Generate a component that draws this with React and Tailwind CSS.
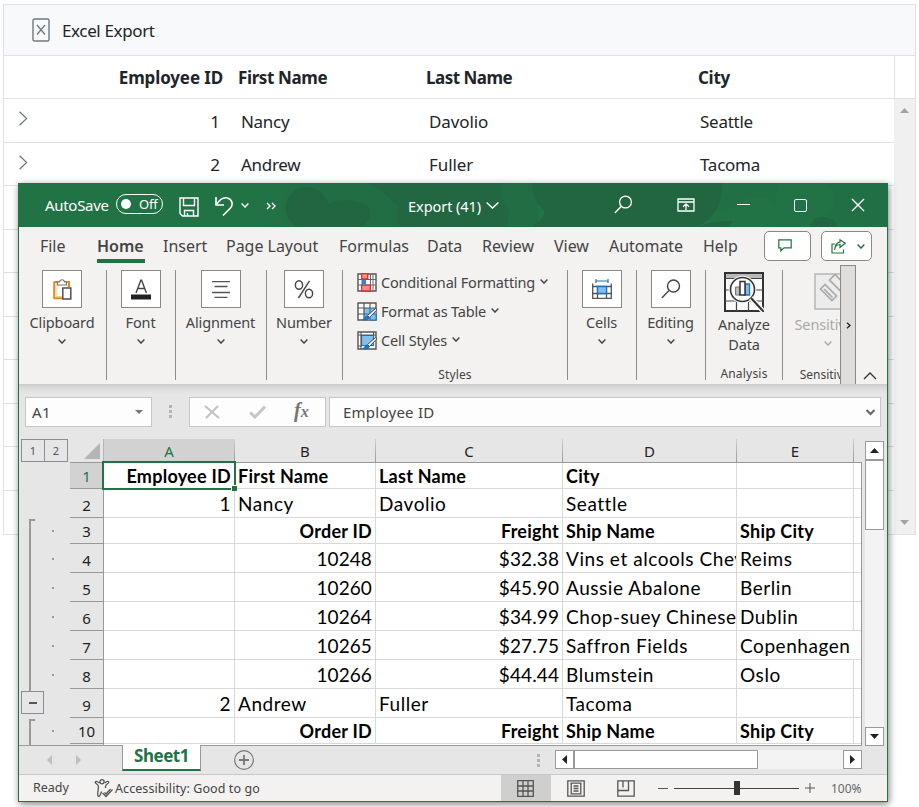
import React from "react";

const gridRows = [
  { h: "h-[44px]", cells: ["1", "Nancy", "Davolio", "Seattle"] },
  { h: "h-[43px]", cells: ["2", "Andrew", "Fuller", "Tacoma"] },
  { h: "h-[44px]" },
  { h: "h-[43px]" },
  { h: "h-[44px]" },
  { h: "h-[43px]" },
  { h: "h-[44px]" },
  { h: "h-[43px]" },
  { h: "h-[44px]" },
];

const tabs = [
  ["File", "w-[57px]"],
  ["Home", "w-[66px]"],
  ["Insert", "w-[63px]"],
  ["Page Layout", "w-[113px]"],
  ["Formulas", "w-[88px]"],
  ["Data", "w-[55px]"],
  ["Review", "w-[72px]"],
  ["View", "w-[55px]"],
  ["Automate", "w-[94px]"],
  ["Help", "w-[61px]"],
];

const sheetRows = [
  { n: 1, h: "h-[26px]", bold: true, a: "Employee ID", b: "First Name", c: "Last Name", d: "City" },
  { n: 2, h: "h-[29px]", a: "1", b: "Nancy", c: "Davolio", d: "Seattle" },
  { n: 3, h: "h-[26px]", bold: true, detail: true, b: "Order ID", c: "Freight", d: "Ship Name", e: "Ship City" },
  { n: 4, h: "h-[29px]", detail: true, b: "10248", c: "$32.38", d: "Vins et alcools Chev", e: "Reims" },
  { n: 5, h: "h-[29px]", detail: true, b: "10260", c: "$45.90", d: "Aussie Abalone", e: "Berlin" },
  { n: 6, h: "h-[29px]", detail: true, b: "10264", c: "$34.99", d: "Chop-suey Chinese", e: "Dublin" },
  { n: 7, h: "h-[29px]", detail: true, b: "10265", c: "$27.75", d: "Saffron Fields", e: "Copenhagen", spill: true },
  { n: 8, h: "h-[29px]", detail: true, b: "10266", c: "$44.44", d: "Blumstein", e: "Oslo" },
  { n: 9, h: "h-[29px]", a: "2", b: "Andrew", c: "Fuller", d: "Tacoma" },
  { n: 10, h: "h-[26px]", bold: true, detail: true, b: "Order ID", c: "Freight", d: "Ship Name", e: "Ship City" },
];

function Chevron({ className = "", w = 8, h = 5, sw = 1.4 }) {
  return (
    <svg className={`shrink-0 ${className}`} width={w} height={h} viewBox={`0 0 ${w} ${h}`} fill="none" stroke="currentColor" strokeWidth={sw}>
      <path d={`M.6 .6 L${w / 2} ${h - 0.9} L${w - 0.6} .6`} />
    </svg>
  );
}

function ExcelGrid() {
  return (
    <div className="ml-[3px] mt-[4px] flex h-[531px] w-[913px] flex-col border border-[#dee2e6] bg-white text-[17px] text-[#212529]">
      <div className="flex h-[51px] shrink-0 items-center border-b border-[#dee2e6] bg-[#f8f9fb] pl-[28px]">
        <svg width="18" height="24" viewBox="0 0 18 24" fill="none" stroke="#6f7880">
          <rect x="1" y="1" width="16" height="22" rx="1.6" strokeWidth="1.4" />
          <path d="M5 7 L13 16.5 M13 7 L5 16.5" strokeWidth="1.3" />
        </svg>
        <span className="ml-[12px] pt-[2px] tracking-[-0.37px]">Excel Export</span>
      </div>
      <div className="flex h-[43px] shrink-0 items-center border-b border-[#dee2e6] pt-[2px] font-bold">
        <span className="w-[219px] text-right tracking-[-0.13px]">Employee ID</span>
        <span className="w-[188px] pl-[15px] tracking-[-0.38px]">First Name</span>
        <span className="w-[271px] pl-[15px] tracking-[-0.5px]">Last Name</span>
        <span className="w-[212px] pl-[16px] tracking-[-0.3px]">City</span>
        <span className="-mt-[2px] h-[43px] border-l border-[#dee2e6]" />
      </div>
      <div className="flex min-h-0 flex-1">
        <div className="w-[890px]">
          {gridRows.map((r, i) => (
            <div key={i} className={`flex items-center border-b border-[#dee2e6] ${r.h}`}>
              {r.cells && (
                <>
                  <svg className="mb-[4px] ml-[15px] shrink-0" width="9" height="15" viewBox="0 0 9 15" fill="none" stroke="#6c757d" strokeWidth="1.2">
                    <path d="M.6 .8 L7.6 7.5 L.6 14.2" />
                  </svg>
                  <span className="w-[192px] pt-[2px] text-right">{r.cells[0]}</span>
                  <span className="w-[188px] pl-[21px] pt-[2px] tracking-[-0.3px]">{r.cells[1]}</span>
                  <span className="w-[271px] pl-[21px] pt-[2px] tracking-[-0.1px]">{r.cells[2]}</span>
                  <span className="pl-[21px] pt-[2px] tracking-[-0.25px]">{r.cells[3]}</span>
                </>
              )}
            </div>
          ))}
        </div>
        <div className="flex flex-1 flex-col items-center justify-between bg-[#f0f0f0] pb-[9px] pt-[9px] text-[#a3a3a3]">
          <svg width="9" height="5" fill="currentColor"><path d="M0 5 L4.5 0 L9 5z" /></svg>
          <svg width="9" height="5" fill="currentColor"><path d="M0 0 L4.5 5 L9 0z" /></svg>
        </div>
      </div>
    </div>
  );
}

function TitleBar() {
  return (
    <div className="relative h-[44px] shrink-0 overflow-hidden bg-[#217346] text-white">
      <svg className="absolute inset-0" width="870" height="44" viewBox="0 0 870 44">
        <defs>
          <linearGradient id="band">
            <stop offset="0" stopColor="#226641" stopOpacity="0" />
            <stop offset=".3" stopColor="#226641" stopOpacity=".45" />
            <stop offset="1" stopColor="#226641" stopOpacity=".45" />
          </linearGradient>
        </defs>
        <path d="M235 0 H520 V44 H235z" fill="url(#band)" />
        <g fill="#226641">
          <ellipse cx="289" cy="25" rx="21.5" ry="21" />
          <path d="M308 22 Q322 15 336 18 Q354 20 352 34 Q350 40 342 44 H300z" />
          <path d="M350 0 H484 Q478 14 490 26 Q492 36 488 44 H382 Q376 34 380 24 Q368 10 350 0z" opacity=".85" />
          <path d="M514 0 H704 C704 14 702 26 692 35 Q686 41 678 44 H514 Q525 36 527 28 C518 22 514 12 514 0z" />
          <path d="M680 44 Q694 37 714 38 Q714 42 708 44z" />
          <path d="M792 44 Q794 34 805 34 Q817 34 819 44z" />
        </g>
        <path d="M704 0 H763 Q756 10 759 20 Q740 8 720 20 Q710 30 700 30 Q704 16 704 0z M810 0 H870 V44 H819 Q815 34 808 33 Q824 18 810 0z" fill="#226641" opacity=".35" />
      </svg>
      <div className="relative flex h-full items-center pl-[27px]">
        <span className="w-[71px] text-[15px] tracking-[-0.3px]">AutoSave</span>
        <div className="mb-[2px] flex h-[20px] w-[47px] items-center rounded-full border border-white pl-[4px]">
          <span className="h-[10px] w-[10px] rounded-full bg-white" />
          <span className="ml-[8px] pt-px text-[13px] tracking-[-0.2px]">Off</span>
        </div>
        <svg className="ml-[16px] mt-[4px]" width="20" height="20" fill="none" stroke="white" strokeWidth="1.4">
          <path d="M1 1 H19 V19 H3.5 L1 16.5z M4.5 1 V8.5 H15.5 V1 M5.5 19 V13.5 H14.5 V19 M8.5 19 V16" />
        </svg>
        <svg className="ml-[16px] mt-[2px]" width="19" height="20" fill="none" stroke="white" strokeWidth="1.6">
          <path d="M1 1 V9 H9 M1.5 8.5 C5 3 9 1 12.5 2 C17.5 3.5 18.5 9 15 12.5 L8 19.5" />
        </svg>
        <Chevron className="ml-[7px]" />
        <svg className="ml-[17px] mt-[2px]" width="11" height="8" fill="none" stroke="white" strokeWidth="1.4"><path d="M1 1 L4 4 L1 7 M6 1 L9 4 L6 7" /></svg>
        <span className="ml-[131px] mt-[3px] w-[78px] text-[14.5px] tracking-[-0.05px]">Export (41)</span>
        <Chevron w={13} h={7} className="mt-[1px]" />
        <svg className="ml-[115px] mb-[1px]" width="19" height="19" fill="none" stroke="white" strokeWidth="1.3"><circle cx="11.5" cy="7" r="5.9" /><path d="M7.3 11.3 L.8 18" /></svg>
        <svg className="ml-[44px] mb-[1px]" width="18" height="14" fill="none" stroke="white" strokeWidth="1.3">
          <path d="M1 1 H17 V13 H1z M1 4 H17 M9 12 V6.5 M6 8.7 L9 5.8 L12 8.7" />
        </svg>
        <span className="mb-[1px] ml-[42px] h-px w-[13px] bg-white" />
        <span className="ml-[44px] h-[13px] w-[13px] rounded-[2px] border-[1.4px] border-white" />
        <svg className="ml-[44px]" width="14" height="14" fill="none" stroke="white" strokeWidth="1.4"><path d="M1 1 L13 13 M13 1 L1 13" /></svg>
      </div>
    </div>
  );
}

function TabRow() {
  return (
    <div className="flex h-[38px] shrink-0 pl-[21px] text-[16px] text-[#444]">
      {tabs.map(([name, w]) => (
        <div key={name} className={`${w} shrink-0 whitespace-nowrap pt-[7px] leading-[24px] ${name === "Home" ? "font-semibold" : "tracking-[-0.03px]"}`}>
          {name}
          {name === "Home" && <div className="mt-[1px] h-[4px] w-[48px] bg-[#217346]" />}
        </div>
      ))}
      <button className="mt-[4px] flex h-[30px] w-[47px] shrink-0 items-center justify-center rounded-[5px] border border-[#8a8886] bg-white pr-[6px] pb-[2px]">
        <svg width="14" height="13" fill="none" stroke="#217346" strokeWidth="1.2"><path d="M.8 .8 H13.2 V8.8 H6 L2.8 12 V8.8 H.8z" /></svg>
      </button>
      <button className="ml-[10px] mt-[4px] flex h-[30px] w-[51px] shrink-0 items-center rounded-[5px] border border-[#8a8886] bg-white pl-[9px] text-[#217346]">
        <svg width="15" height="15" fill="none" stroke="currentColor" strokeWidth="1.2">
          <path d="M4 5 H1 V14 H12.5 V10.5 M3.5 11 C4 7 6 5.5 9 5.5 V8.5 L14.2 4.3 L9 .8 V3.2 C5.5 3.5 4 7 3.5 11z" />
        </svg>
        <Chevron className="ml-[11px]" />
      </button>
    </div>
  );
}

function Group({ width, label, children }) {
  return (
    <div className={`flex h-[110px] shrink-0 flex-col items-center border-r border-[#8f8e8d] pr-px ${width}`}>
      <div className="flex h-[38px] w-[40px] shrink-0 items-center justify-center border border-[#8a8886] bg-white">{children}</div>
      <span className="mt-[4px] text-[14.5px] leading-[20px] tracking-[-0.12px]">{label}</span>
      <Chevron className="mt-[7px]" />
    </div>
  );
}

function Brush() {
  return (
    <>
      <path d="M18.8 6.2 L10.5 13.6 L12.4 15.5 L19.6 8.2z" fill="#fff" stroke="#444" strokeWidth="1" />
      <path d="M10.3 13.4 C7.5 13.4 8 16.5 4.8 17.6 C8 19.5 12.4 18.5 12.6 15.6z" fill="#1b75c4" />
    </>
  );
}

const cfIcon = (
  <svg width="20" height="19" viewBox="0 0 20 19">
    <path d="M1 1 H19 V18 H1z" fill="#fff" stroke="#555" strokeWidth="1.4" />
    <path d="M1 6.5 H19 M1 12 H19 M5.5 1 V18 M13.5 1 V18 M16 1 V18" stroke="#666" strokeWidth="1" />
    <path d="M4.7 .7 H10.8 V6 H4.7z M4.7 12.2 H13.3 V18 H4.7z" fill="#ff8f8f" stroke="#e02b2b" strokeWidth="1.3" />
    <path d="M4.5 6.8 H9 V11.5 H4.5z" fill="#2a87d8" />
  </svg>
);
const ftIcon = (
  <svg width="20" height="19" viewBox="0 0 20 19">
    <path d="M1 1 H19 V18 H1z" fill="#fff" stroke="#555" strokeWidth="1.4" />
    <path d="M7 6 H19 V18 H7z" fill="#83beec" />
    <path d="M13 6.5 V18 M7 12 H19 M19.2 12 V18 H13" stroke="#1b75c4" strokeWidth="1.2" fill="none" />
    <path d="M1 6 H19 M1 12 H7 M7 1 V18 M13 1 V6" stroke="#555" strokeWidth="1.2" />
    <Brush />
  </svg>
);
const csIcon = (
  <svg width="20" height="19" viewBox="0 0 20 19">
    <path d="M1 1 H19 V18 H1z" fill="#fff" stroke="#555" strokeWidth="1.4" />
    <path d="M4.5 4.5 H16.5 V14.5 H4.5z" fill="#83beec" stroke="#1b75c4" strokeWidth="1.2" />
    <path d="M1 4 H19 M1 15 H5 M4 1 V18 M16.5 1 V5" stroke="#555" strokeWidth="1.1" />
    <Brush />
  </svg>
);

function Ribbon() {
  return (
    <div className="flex h-[119px] shrink-0 text-[#444]">
      <div className="flex pt-[5px]">
        <Group width="w-[88px]" label="Clipboard">
          <svg width="19" height="21" viewBox="0 0 19 21" fill="none">
            <path d="M1.2 3 H16 V8 M1.2 2.4 V19.2 H9" stroke="#e68a1e" strokeWidth="2" />
            <path d="M3 4.5 V17.5 H9" stroke="#f9d08b" strokeWidth="1.2" />
            <path d="M4.5 6 V3 H6.5 C7 0 11 0 11.500 3 H13.500 V6z" fill="#fff" stroke="#777" strokeWidth="1.2" />
            <rect x="9.8" y="9" width="8" height="11" fill="#fff" stroke="#444" strokeWidth="1.4" />
          </svg>
        </Group>
        <Group width="w-[69px]" label="Font">
          <svg width="20" height="21" viewBox="0 0 20 21" fill="none">
            <path d="M5 14 L9.800 1.200 H10.600 L15.400 14 M6.600 9.500 H13.800" stroke="#444" strokeWidth="1.4" />
            <rect y="15.500" width="20" height="5" fill="#222" />
          </svg>
        </Group>
        <Group width="w-[91px]" label="Alignment">
          <svg width="18" height="17" fill="none" stroke="#555" strokeWidth="1.400">
            <path d="M0 .5 H18 M2.500 5.500 H15.500 M0 11.500 H18 M2.500 16.500 H15.500" />
          </svg>
        </Group>
        <Group width="w-[76px]" label="Number">
          <svg width="20" height="19" fill="none" stroke="#444" strokeWidth="1.4">
            <ellipse cx="5" cy="5" rx="3.6" ry="4.300" /><ellipse cx="15" cy="13.500" rx="3.600" ry="4.300" /><path d="M15.500 .8 L4.500 18" />
          </svg>
        </Group>
        <div className="flex h-[110px] w-[225px] shrink-0 flex-col border-r border-[#8f8e8d] pl-[14px] text-[14.5px] tracking-[-0.18px]">
          {[[cfIcon, "Conditional Formatting"], [ftIcon, "Format as Table"], [csIcon, "Cell Styles"]].map(([icon, label]) => (
            <div key={label} className="flex h-[29px] shrink-0 items-center pb-[4px]">
              {icon}
              <span className="ml-[4px]">{label}</span>
              <Chevron className="mb-[2px] ml-[5px]" />
            </div>
          ))}
          <div className="-ml-[14px] mt-[10px] text-center text-[12px] leading-[16px] tracking-[0.15px]">Styles</div>
        </div>
        <Group width="w-[69px]" label="Cells">
          <svg width="20" height="20" viewBox="0 0 20 20" fill="none">
            <path d="M.7 4.500 V19.300 H19.300 V4.500 M0 7.500 H20 M0 14.500 H20 M5.500 7.500 V20 M14.500 7.500 V20" stroke="#555" strokeWidth="1.300" />
            <path d="M5.500 7.500 H14.500 V14.500 H5.500z" fill="#83beec" stroke="#1b75c4" strokeWidth="1.300" />
            <path d="M4 2 H16 M4 0 V4 M16 0 V4" stroke="#1b75c4" strokeWidth="1.200" />
          </svg>
        </Group>
        <Group width="w-[69px]" label="Editing">
          <svg width="20" height="20" fill="none" stroke="#444" strokeWidth="1.400"><circle cx="12.500" cy="7" r="6" /><path d="M8 11.500 L.8 19" /></svg>
        </Group>
        <div className="flex h-[110px] w-[77px] shrink-0 flex-col items-center border-r border-[#8f8e8d]">
          <svg className="mt-[2px] shrink-0" width="40" height="40" viewBox="0 0 40 40" fill="none">
            <path d="M1 1 H39 V39 H1z" fill="#fafafa" stroke="#333" strokeWidth="2" />
            <path d="M2 2 H38 V6 H2z" fill="#b9b9b9" />
            <path d="M1 6.500 H39 M1 18 H39 M1 29 H39 M12.500 29 V39 M24.500 29 V39" stroke="#444" strokeWidth="1.200" />
            <circle cx="18.500" cy="17.500" r="13.800" fill="#fafafa" />
            <circle cx="18.500" cy="17.500" r="12" fill="#fafafa" stroke="#333" strokeWidth="1.600" />
            <path d="M27 26 L39 39" stroke="#fafafa" strokeWidth="5" />
            <path d="M27 26 L39 39" stroke="#333" strokeWidth="2" />
            <path d="M11.500 15 H16 V23 H11.500z" fill="#bbb" stroke="#777" />
            <path d="M21 12 H25.500 V23 H21z" fill="#83beec" stroke="#1b75c4" strokeWidth="1.300" />
            <path d="M16 9.500 H21 V23 H16z" fill="#fff" stroke="#333" strokeWidth="1.500" />
          </svg>
          <span className="mt-[2px] text-center text-[14.5px] leading-[20px] tracking-[-0.1px]">Analyze<br />Data</span>
          <span className="mt-[12px] text-[12px] leading-[16px] tracking-[0.2px]">Analysis</span>
        </div>
        <div className="h-[114px] w-[57px] shrink-0 overflow-hidden">
          <div className="flex w-[90px] flex-col items-center text-[#a9a9a9]">
            <svg className="mr-[2px] mt-[2px] shrink-0" width="27" height="38" viewBox="0 0 27 38" fill="none">
              <path d="M1 2 H27 V37 H1z" fill="#ececec" stroke="#b5b5b5" strokeWidth="1.500" />
              <path d="M6.500 17 L11 12.500 L22.500 24 L18 28.500z M10 17 L18.500 25.500 M15.500 8 L21 2.500 L30 11.500 V22.500z" fill="#ececec" stroke="#a9a9a9" strokeWidth="1.700" />
            </svg>
            <span className="mt-[4px] text-[14.5px] leading-[20px] tracking-[-0.15px]">Sensitivity</span>
            <Chevron className="mt-[7px]" />
            <span className="mt-[22px] text-[12px] leading-[14px] text-[#444]">Sensitivity</span>
          </div>
        </div>
      </div>
      <div className="flex h-[120px] w-[16px] shrink-0 items-center justify-center border border-[#8a8886] bg-[#dedddc]">
        <svg width="5" height="7" fill="none" stroke="#222" strokeWidth="1.300"><path d="M1 .8 L4 3.500 L1 6.200" /></svg>
      </div>
      <svg className="ml-[7px] mt-[107px]" width="14" height="8" fill="none" stroke="#333" strokeWidth="1.300"><path d="M1 7 L7 1 L13 7" /></svg>
    </div>
  );
}

function FormulaBar() {
  return (
    <div className="flex h-[55px] shrink-0 items-start bg-[#e6e6e6] bg-[linear-gradient(to_bottom,#cbcbcb_0px,#dcdcdc_4px,#e6e6e6_10px)] pl-[6px] pt-[13px] text-[16px] text-[#444]">
      <div className="flex h-[30px] w-[127px] items-center justify-between border border-[#c6c6c6] bg-[#fdfdfd] pl-[6px] pr-[8px]">
        <span className="text-[15px] tracking-[0.5px]">A1</span>
        <svg width="8" height="4" fill="#777"><path d="M0 0 H8 L4 4z" /></svg>
      </div>
      <div className="ml-[17px] mt-[8px] flex flex-col gap-[2px]">
        <i className="h-[3px] w-[3px] bg-[#b4b4b4]" /><i className="h-[3px] w-[3px] bg-[#b4b4b4]" /><i className="h-[3px] w-[3px] bg-[#b4b4b4]" />
      </div>
      <div className="ml-[17px] flex h-[30px] w-[137px] items-center border border-[#c6c6c6] bg-[#fdfdfd] pl-[14px]">
        <svg width="16" height="14" fill="none" stroke="#c3c3c3" strokeWidth="2.200"><path d="M1 1 L15 13 M14 1 L2 13" /></svg>
        <svg className="ml-[29px]" width="17" height="14" fill="none" stroke="#c6c6c6" strokeWidth="3"><path d="M1 7.500 L6 12 L16 1.500" /></svg>
        <span className="mb-[3px] ml-[28px] font-['Liberation_Serif',serif] text-[20px] font-bold italic leading-[20px] text-[#757575]">f<span className="text-[16px]">x</span></span>
      </div>
      <div className="ml-[3px] flex h-[30px] w-[552px] items-center justify-between border border-[#c6c6c6] bg-[#fdfdfd] pl-[13px] pr-[5px]">
        <span className="text-[15px] tracking-[0.25px]">Employee ID</span>
        <svg width="9" height="7" fill="none" stroke="#666" strokeWidth="2"><path d="M.5 1 L4.500 5 L8.500 1" /></svg>
      </div>
    </div>
  );
}

function HeadCell({ w, children, active }) {
  return (
    <div className={`flex h-full shrink-0 ${w} ${active ? "bg-[#d2d2d2] text-[#217346]" : ""}`}>
      <span className="flex-1 pt-[1px] text-center">{children}</span>
      <i className="h-full w-px bg-linear-to-b from-[#d0d0d0] to-[#999]" />
    </div>
  );
}

function Outline() {
  return (
    <div className="flex h-[306px] w-[51px] shrink-0 flex-col bg-[#e6e6e6] pl-[2px]">
      <div className="flex h-[23px] text-[11px] text-[#555]">
        {[1, 2].map((n) => (
          <span key={n} className="-mr-px flex h-[23px] w-[24px] items-center justify-center border border-[#8a8e94] pt-[2px]">{n}</span>
        ))}
      </div>
      <div className="flex flex-1">
        <div className="flex w-[23px] flex-col">
          <div className="ml-[8px] mt-[57px] h-[172px] w-[6px] border-l-2 border-t-2 border-[#999]" />
          <div className="flex h-[23px] w-[23px] items-center justify-center border border-[#8a8e94]">
            <i className="h-[2px] w-[8px] bg-[#555]" />
          </div>
          <div className="ml-[8px] mt-[5px] w-[6px] flex-1 border-l-2 border-t-2 border-[#999]" />
        </div>
        <div className="pl-[8px] pt-[1px]">
          {sheetRows.map((r) => (
            <div key={r.n} className={`flex items-center ${r.h}`}>
              {r.detail && <i className="h-[2px] w-[2px] bg-[#999]" />}
            </div>
          ))}
        </div>
      </div>
    </div>
  );
}

function SheetRow({ r }) {
  const pad = r.bold ? "pb-[2px]" : "pb-[3px]";
  const cell = `flex h-full shrink-0 items-end whitespace-nowrap border-b border-r border-[#d9d9d9] pl-[3px] pr-[3px] leading-[20px] ${pad}`;
  const num = r.detail ? `justify-end ${r.bold ? "" : "tracking-[0.1px]"}` : "";
  return (
    <div className={`flex ${r.h} shrink-0 ${r.bold ? "font-bold tracking-[0.25px]" : "text-[19px] tracking-[0.55px]"}`}>
      <div className={`flex w-[34px] shrink-0 items-end justify-center border-b border-r border-[#999] pb-[2px] font-['Noto_Sans',sans-serif] text-[15px] font-normal leading-[20px] tracking-normal ${r.n === 1 ? "bg-[#d2d2d2] text-[#217346]" : "bg-[#e6e6e6] text-[#222]"}`}>{r.n}</div>
      <div className={`relative w-[131px] justify-end ${cell}`}>
        {r.a}
        {r.n === 1 && (
          <>
            <span className="absolute -left-[2px] -top-[2px] h-[29px] w-[134px] border-2 border-[#217346]" />
            <span className="absolute -bottom-[3px] -right-[3px] z-10 h-[6px] w-[6px] border-l border-t border-white bg-[#217346]" />
          </>
        )}
      </div>
      <div className={`w-[141px] ${num} ${cell}`}>{r.b}</div>
      <div className={`w-[187px] ${num} ${cell}`}>{r.c}</div>
      <div className={`w-[174px] overflow-hidden ${cell} !pr-0`}>{r.d}</div>
      <div className={`w-[117px] ${cell} ${r.spill ? "border-r-transparent" : ""}`}>{r.e}</div>
      <div className="w-[7px] shrink-0 border-b border-[#d9d9d9]" />
    </div>
  );
}

const boxBtn = "flex h-[19px] w-[19px] shrink-0 items-center justify-center border border-[#999] bg-white";

function Sheet() {
  return (
    <div className="flex h-[307px] shrink-0 bg-[#e6e6e6]">
      <Outline />
      <div className="flex h-[307px] w-[792px] shrink-0 flex-col">
        <div className="flex h-[24px] shrink-0 border-b border-[#999] text-[15px] text-[#222]">
          <div className="flex w-[34px] items-end justify-end border-r border-[#b5b5b5] pb-[3px] pr-[3px]">
            <svg width="16" height="16" fill="#b5b5b5"><path d="M16 0 V16 H0z" /></svg>
          </div>
          <HeadCell w="w-[131px]" active>A</HeadCell>
          <HeadCell w="w-[141px]">B</HeadCell>
          <HeadCell w="w-[187px]">C</HeadCell>
          <HeadCell w="w-[174px]">D</HeadCell>
          <HeadCell w="w-[117px]">E</HeadCell>
        </div>
        <div className="h-[282px] border-r border-[#999] bg-white font-['Lato',sans-serif] text-[18px] text-black">
          {sheetRows.map((r) => <SheetRow key={r.n} r={r} />)}
          <div className="h-px w-[34px] border-r border-[#999] bg-[#e6e6e6]" />
        </div>
        <div className="h-px shrink-0 bg-[#999]" />
      </div>
      <div className="ml-[3px] mt-[2px] flex h-[305px] w-[19px] flex-col justify-between bg-[#f3f3f3]">
        <div>
          <div className={boxBtn}><svg width="9" height="5" fill="#222"><path d="M0 5 L4.500 0 L9 5z" /></svg></div>
          <div className="h-[70px] w-[19px] border border-[#999] bg-white" />
        </div>
        <div className={boxBtn}><svg width="9" height="5" fill="#222"><path d="M0 0 L4.500 5 L9 0z" /></svg></div>
      </div>
    </div>
  );
}

function SheetTabs() {
  return (
    <div className="flex h-[28px] shrink-0 bg-[#e6e6e6]">
      <div className="-mt-px flex h-[29px] w-[843px] border-t border-[#999]">
        <svg className="ml-[28px] mt-[9px]" width="5" height="10" fill="#bdbdbd"><path d="M5 0 V10 L0 5z" /></svg>
        <svg className="ml-[24px] mt-[9px]" width="5" height="10" fill="#bdbdbd"><path d="M0 0 V10 L5 5z" /></svg>
        <div className="-mt-px ml-[41px] h-[26px] w-[79px] border-b-2 border-l border-r border-b-[#217346] border-l-[#999] border-r-[#999] bg-white text-center text-[17px] font-bold leading-[22px] tracking-[-0.500px] text-[#217346]">Sheet1</div>
        <svg className="ml-[33px] mt-[4px]" width="20" height="20" fill="none" stroke="#777">
          <circle cx="10" cy="10" r="9.300" strokeWidth="1.200" /><path d="M10 5 V15 M5 10 H15" strokeWidth="1.800" />
        </svg>
        <div className="ml-[283px] mt-[8px] flex flex-col gap-[2px]">
          <i className="h-[3px] w-[3px] bg-[#b4b4b4]" /><i className="h-[3px] w-[3px] bg-[#b4b4b4]" /><i className="h-[3px] w-[3px] bg-[#b4b4b4]" />
        </div>
        <div className="ml-[15px] mt-[4px] flex h-[19px] w-[307px] shrink-0 bg-[#f3f3f3]">
          <div className={boxBtn}><svg width="5" height="9" fill="#222"><path d="M5 0 V9 L0 4.500z" /></svg></div>
          <div className="h-[19px] w-[184px] border border-[#999] bg-white" />
          <div className={`ml-auto ${boxBtn}`}><svg width="5" height="9" fill="#222"><path d="M0 0 V9 L5 4.500z" /></svg></div>
        </div>
      </div>
    </div>
  );
}

function StatusBar() {
  return (
    <div className="flex h-[27px] shrink-0 items-center border-t border-[#c8c8c8] bg-[#f3f2f1] pl-[14px] text-[12.500px] text-[#444]">
      <span className="w-[61px] pt-px">Ready</span>
      <svg width="20" height="19" viewBox="0 0 20 19" fill="none" stroke="#555" strokeWidth="1.300">
        <circle cx="8" cy="2.800" r="2.100" />
        <path d="M5.500 4 C4 3 2 1.500 1.200 3 C.6 4.500 4.500 5 4.500 7.500 C4.500 11 3 14 4 17 C5 18.500 6.500 16 7.500 12.500 M10.500 4 C12 3 14 1.500 14.800 3 C15.200 4.500 11.500 5 11.500 7.500 V9" />
        <path d="M8.500 14 L12 17.500 L18.500 10.500 M10.500 13.500 L12 15 L16.500 10" />
      </svg>
      <span className="ml-px w-[386px] pt-[2px] tracking-[0.080px]">Accessibility: Good to go</span>
      <div className="flex h-full w-[50px] items-center justify-center bg-[#cfcfcd] pr-px">
        <svg width="17" height="17" fill="none" stroke="#555" strokeWidth="1.300"><path d="M.7 .7 H16.300 V16.300 H.7z M.7 6 H16.300 M.7 11 H16.300 M6 .7 V16.300 M11 .7 V16.300" /></svg>
      </div>
      <svg className="ml-[16px]" width="18" height="17" fill="none" stroke="#555" strokeWidth="1.300"><path d="M.8 .8 H17.200 V16.200 H.8z M4.200 3.200 H13.800 V13.800 H4.200z M6.500 6 H11.500 M6.500 8.500 H11.500 M6.500 11 H11.500" /></svg>
      <svg className="ml-[32px]" width="18" height="17" fill="none" stroke="#555" strokeWidth="1.300"><path d="M.8 .8 H17.200 V16.200 H.8z M.8 10.500 H11.500 V.8 M6 .8 V7.500" /></svg>
      <i className="ml-[23px] h-px w-[10px] bg-[#555]" />
      <div className="ml-[6px] flex w-[125px] items-center">
        <i className="h-px w-[60px] bg-[#444]" /><i className="h-[14px] w-[6px] bg-[#333]" /><i className="h-px flex-1 bg-[#444]" />
      </div>
      <svg className="ml-[6px]" width="10" height="10" stroke="#555"><path d="M5 0 V10 M0 5 H10" /></svg>
      <span className="ml-[16px] pt-[2px] text-[12px] text-[#666]">100%</span>
    </div>
  );
}

export default function App() {
  return (
    <div className="relative h-[807px] w-[919px] overflow-hidden bg-white font-['Noto_Sans',sans-serif]">
      <ExcelGrid />
      <div className="absolute left-[18px] top-[183px] flex h-[619px] w-[870px] flex-col border border-t-0 border-[#217346] bg-[#f3f2f1] shadow-[1px_2px_7px_rgba(0,0,0,0.5)]">
        <div className="-mx-px"><TitleBar /></div>
        <TabRow />
        <Ribbon />
        <FormulaBar />
        <Sheet />
        <SheetTabs />
        <StatusBar />
      </div>
    </div>
  );
}
